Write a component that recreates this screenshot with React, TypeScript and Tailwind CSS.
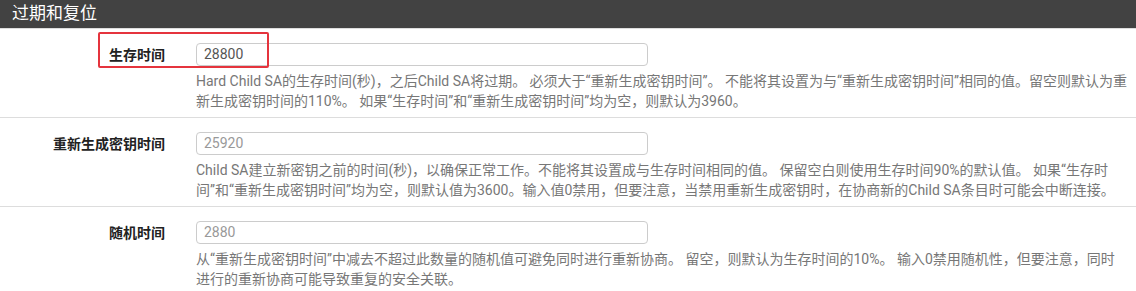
const font = 'font-["Roboto","Noto_Sans_CJK_SC",sans-serif]';

type Row = {
  label: string;
  value: string;
  placeholder?: boolean;
  help: string[];
  marked?: boolean;
};

const rows: Row[] = [
  {
    label: '生存时间',
    value: '28800',
    marked: true,
    help: [
      'Hard Child SA的生存时间(秒)，之后Child SA将过期。 必须大于“重新生成密钥时间”。 不能将其设置为与“重新生成密钥时间”相同的值。留空则默认为重',
      '新生成密钥时间的110%。 如果“生存时间”和“重新生成密钥时间”均为空，则默认为3960。',
    ],
  },
  {
    label: '重新生成密钥时间',
    value: '25920',
    placeholder: true,
    help: [
      'Child SA建立新密钥之前的时间(秒)，以确保正常工作。不能将其设置成与生存时间相同的值。 保留空白则使用生存时间90%的默认值。 如果“生存时',
      '间”和“重新生成密钥时间”均为空，则默认值为3600。输入值0禁用，但要注意，当禁用重新生成密钥时，在协商新的Child SA条目时可能会中断连接。',
    ],
  },
  {
    label: '随机时间',
    value: '2880',
    placeholder: true,
    help: [
      '从“重新生成密钥时间”中减去不超过此数量的随机值可避免同时进行重新协商。 留空，则默认为生存时间的10%。 输入0禁用随机性，但要注意，同时',
      '进行的重新协商可能导致重复的安全关联。',
    ],
  },
];

function FieldRow({ row }: { row: Row }) {
  return (
    <div className="relative flex border-b border-[#dddddd] pt-[14px] pb-[6px]">
      {row.marked && (
        <div className="absolute left-[98px] top-[3px] h-[36px] w-[171px] rounded-[2px] border-2 border-[#e5343d]" />
      )}
      <div className="w-[181px] shrink-0 pr-4 pt-[2px] text-right text-[14px] font-bold leading-[20px] text-[#222]">
        {row.label}
      </div>
      <div className="pl-[15px]">
        <div
          className={
            'flex h-[23px] w-[452px] items-center rounded-[4px] border border-[#cccccc] px-[7px] text-[14px] ' +
            (row.placeholder ? 'text-[#999999]' : 'text-[#555555]')
          }
        >
          {row.value}
        </div>
        <div className="mt-[5px] text-[14px] leading-[20px] text-[#777777]">
          {row.help.map((line, i) => (
            <div key={i} className="whitespace-nowrap">
              {line}
            </div>
          ))}
        </div>
      </div>
    </div>
  );
}

export default function App() {
  return (
    <div className={`${font} h-[291px] w-[1136px] overflow-hidden bg-white`}>
      <div className="flex h-[28px] items-center bg-[#424242] px-[12px] text-[17px] text-white">
        过期和复位
      </div>
      <div className="border-b border-[#dddddd]" />
      {rows.map((row) => (
        <FieldRow key={row.label} row={row} />
      ))}
    </div>
  );
}
